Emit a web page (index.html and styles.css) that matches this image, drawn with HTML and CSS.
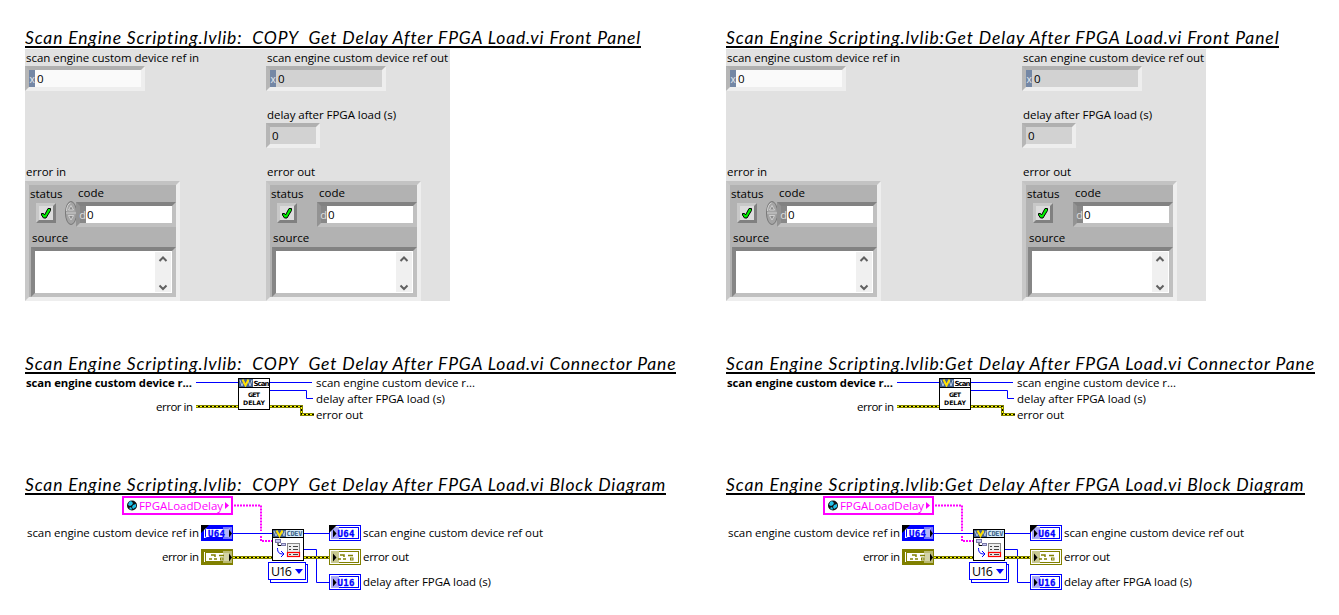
FILE: index.html
```html
<!DOCTYPE html>
<html lang="en">
<head>
<meta charset="utf-8">
<title>Scan Engine Scripting.lvlib</title>
<link rel="stylesheet" href="styles.css">
</head>
<body>
<svg class="defs" width="0" height="0" aria-hidden="true">
  <symbol id="check" viewBox="0 0 14 14"><path d="M2.500 7.500h2l1 1.500 3.500-6.500h2.500v2l-4.500 7.500h-2.500l-2-3z" fill="#00f000" stroke="#000" stroke-width="1"/></symbol>
  <symbol id="spin" viewBox="0 0 12 24"><ellipse cx="6" cy="12" rx="5.500" ry="11.500" fill="#a4a4a4" stroke="#777"/><path d="M1.500 10a5 9 0 0 1 4-8" fill="none" stroke="#d4d4d4"/><path d="M1 12h10" stroke="#ccc"/><path d="M3.500 9 6 4.500 8.500 9z" fill="#8c8c8c" stroke="#ddd" stroke-width=".8"/><path d="M3.500 14.500h5L6 19z" fill="#8c8c8c" stroke="#ddd" stroke-width=".8"/></symbol>
  <symbol id="scroll" viewBox="0 0 16 40"><path d="M4.500 9 8 5.500l3.500 3.500M4.500 33.500 8 37l3.500-3.500" fill="none" stroke="#606060" stroke-width="2"/></symbol>
  <symbol id="wires" viewBox="25 374 651 50">
    <path d="M196 382.500H238M270 382.500H312M270 390.500H306.500V398.500H313" class="wire"/>
    <path d="M196 406.500H238M270 406.500H301.500V414.500H314" class="err"/>
    <path d="M196 406.500H238M270 406.500H301.500V414.500H314" class="err-core"/>
    <path d="M196 406.500H238M270 406.500H301.500V414.500H314" class="err-dash"/>
    <rect x="238.500" y="378.500" width="31" height="31" fill="#fff" stroke="#000"/>
    <rect x="239" y="379" width="14" height="8" fill="#42618f"/>
    <path d="M240 380l2 6 2-5M248 380l2 6 2-6" class="vs"/>
    <path d="M242.500 379.500l3 6 3-6" class="v"/>
    <path d="M239 387.500H269" stroke="#000"/>
  </symbol>
  <symbol id="diagram" viewBox="25 495 651 96">
    <path d="M233 533.500H272M304 533.500H329M304 549.500H316.500V582.500H329" class="wire"/>
    <path d="M233 557.500H272M304 557.500H329" class="err"/>
    <path d="M233 557.500H272M304 557.500H329" class="err-core"/>
    <path d="M233 557.500H272M304 557.500H329" class="err-dash"/>
    <path d="M234 505.500H261V531M261 536V541H272" class="str"/>
    <rect x="123" y="497" width="109" height="17" fill="#fff" stroke="#f0f" stroke-width="2"/>
    <circle cx="132" cy="505.500" r="5" fill="#111"/><path d="M129 502l2-1 2 2-1 2-2 1-2-1zM129 508l2-1 1 2-1 1zM133 505l3-1v3l-3 2-1-2z" fill="#20c0e8"/>
    <path d="M225 502v7l4-3.500z" fill="#f0f"/>
    <rect x="202.500" y="526.500" width="29" height="13" fill="#fff" stroke="#00f" stroke-width="3"/><rect x="205.500" y="528.500" width="24" height="9" rx="1" fill="none" stroke="#00f"/>
    <rect x="223" y="527" width="9" height="12" fill="#9c9cf8" opacity=".75"/>
    <path d="M229 529.500v8l3-4z" fill="#000"/>
    <path d="M201 525h8l-8 8z" fill="#000"/>
    <g color="#808000">
      <rect x="202.500" y="550.500" width="29" height="13" fill="#fff" stroke="currentColor" stroke-width="3"/><rect x="205.500" y="552.500" width="24" height="9" fill="none" stroke="currentColor"/>
      <rect x="223" y="551" width="9" height="12" fill="#c8c890" opacity=".8"/>
      <path d="M229 553.500v8l3-4z" fill="#000"/>
      <path d="M211 555h4v2M219 555.500h5M209 559h3M214 559h3" stroke="currentColor" stroke-width="1.500" fill="none"/><rect x="220.500" y="558" width="2.500" height="2" fill="none" stroke="currentColor"/>
      <rect x="329.500" y="549.500" width="31" height="15" fill="#fff" stroke="currentColor"/><rect x="331.500" y="551.500" width="27" height="11" fill="#fff" stroke="currentColor"/>
      <rect x="331" y="551" width="8" height="12" fill="#c8c890"/>
      <path d="M333 553.500v8l3.500-4z" fill="#000"/>
      <path d="M340 555h4v2M348 555.500h5M338 559h3M343 559h3" stroke="currentColor" stroke-width="1.500" fill="none"/><rect x="350.500" y="558" width="2.500" height="2" fill="none" stroke="currentColor"/>
    </g>
    <g id="u64out"><rect x="329.500" y="525.500" width="31" height="15" fill="#fff" stroke="#00f"/><rect x="331.500" y="527.500" width="27" height="11" fill="#fff" stroke="#00f"/><rect x="331" y="527" width="8" height="12" fill="#a8a8f8"/><path d="M333 529.500v8l3.500-4z" fill="#000"/></g>
    <use href="#u64out" y="49"/>
    <path d="M329 525h8l-8 8z" fill="#000"/>
    <rect x="272.500" y="529.500" width="31" height="31" fill="#fff" stroke="#000"/>
    <rect x="273" y="530" width="13" height="7" fill="#42618f"/>
    <rect x="286" y="530" width="17" height="7" fill="#d8ecfa"/>
    <path d="M273 537.500h30" stroke="#000"/>
    <path d="M274 531l2 5 2-4M282 531l2 5 1-5" class="vs"/><path d="M276.500 530.500l3 5.500 3-5.500" class="v"/>
    <rect x="275.500" y="539.500" width="5" height="3" fill="#c8c8f0" stroke="#7878a8"/><rect x="281.500" y="543.500" width="4" height="2" fill="#c8c8f0" stroke="#7878a8"/>
    <path d="M278 543v2.500h3" fill="none" stroke="#000"/>
    <path d="M277.500 548c0 5 2 6 6 6M281 551l3 3-3 3" fill="none" stroke="#00f"/>
    <rect x="287.500" y="543.500" width="12" height="13" fill="#eee" stroke="#888"/>
    <path d="M289 546.500h2M289 549.500h2M289 554.500h2M293 546.500h5M293 549.500h5M293 554.500h5" stroke="#444"/>
    <rect x="287.500" y="552.500" width="12" height="4" fill="none" stroke="#f00" stroke-width="1.200"/>
    <path d="M307.500 564V582.500H270M306 564.500h1.500M270.500 580v2" fill="none" stroke="#00f"/>
    <rect x="268.500" y="562.500" width="37" height="17" fill="#fff" stroke="#00f"/>
    <path d="M295 569h8l-4 5z" fill="#00f"/>
  </symbol>
</svg>
<main class="page">
  <article class="vi">
    <section class="front">
      <h2 class="title">Scan Engine Scripting.lvlib:  COPY  Get Delay After FPGA Load.vi Front Panel</h2>
      <div class="panel">
        <div class="side">
          <div class="field top"><span class="label">scan engine custom device ref in</span><div class="num wide edit"><i class="radix">x</i>0</div></div>
          <span class="label">error in</span>
          <div class="cluster">
            <div class="col-status"><span>status</span><div class="led"><svg><use href="#check"/></svg></div></div>
            <svg class="spin"><use href="#spin"/></svg>
            <div class="col-code"><span>code</span><div class="code"><i class="radix">d</i>0</div></div>
            <div class="src"><span>source</span><div class="box"><svg class="scroll"><use href="#scroll"/></svg></div></div>
          </div>
        </div>
        <div class="side">
          <div class="field"><span class="label">scan engine custom device ref out</span><div class="num wide"><i class="radix">x</i>0</div></div>
          <div class="field"><span class="label">delay after FPGA load (s)</span><div class="num">0</div></div>
          <span class="label">error out</span>
          <div class="cluster">
            <div class="col-status"><span>status</span><div class="led"><svg><use href="#check"/></svg></div></div>
            <div class="spin"></div>
            <div class="col-code"><span>code</span><div class="code"><i class="radix">d</i>0</div></div>
            <div class="src"><span>source</span><div class="box"><svg class="scroll"><use href="#scroll"/></svg></div></div>
          </div>
        </div>
      </div>
    </section>
    <section class="connector">
      <h2 class="title">Scan Engine Scripting.lvlib:  COPY  Get Delay After FPGA Load.vi Connector Pane</h2>
      <svg class="canvas" width="651" height="50" viewBox="25 374 651 50">
        <use href="#wires" x="25" y="374" width="651" height="50"/>
        <text x="26" y="387" textLength="166" class="b">scan engine custom device r...</text>
        <text x="156" y="411" textLength="37">error in</text>
        <text x="316" y="387" textLength="159">scan engine custom device r...</text>
        <text x="316" y="403" textLength="129">delay after FPGA load (s)</text>
        <text x="316" y="419" textLength="47">error out</text>
        <text x="253.500" y="385.500" textLength="16" class="px scan">Scan</text>
        <text x="248" y="396.500" textLength="12" class="px">GET</text>
        <text x="243" y="405" textLength="22" class="px">DELAY</text>
      </svg>
    </section>
    <section class="block">
      <h2 class="title">Scan Engine Scripting.lvlib:  COPY  Get Delay After FPGA Load.vi Block Diagram</h2>
      <svg class="canvas" width="651" height="96" viewBox="25 495 651 96">
        <use href="#diagram" x="25" y="495" width="651" height="96"/>
        <text x="139" y="510" textLength="84" class="pink">FPGALoadDelay</text>
        <text x="27" y="537" textLength="172">scan engine custom device ref in</text>
        <text x="162" y="561" textLength="37">error in</text>
        <text x="363" y="537" textLength="180">scan engine custom device ref out</text>
        <text x="363" y="561" textLength="46">error out</text>
        <text x="363" y="586" textLength="128">delay after FPGA load (s)</text>
        <text x="208" y="536.500" textLength="17" class="type">U64</text>
        <text x="337.500" y="536.500" textLength="17" class="type">U64</text>
        <text x="337.500" y="585.500" textLength="17" class="type">U16</text>
        <text x="271" y="576" textLength="21" class="poly">U16</text>
        <text x="286.500" y="536" textLength="16" class="cdev">CDEV</text>
      </svg>
    </section>
  </article>
  <article class="vi second">
    <section class="front">
      <h2 class="title">Scan Engine Scripting.lvlib:Get Delay After FPGA Load.vi Front Panel</h2>
      <div class="panel">
        <div class="side">
          <div class="field top"><span class="label">scan engine custom device ref in</span><div class="num wide edit"><i class="radix">x</i>0</div></div>
          <span class="label">error in</span>
          <div class="cluster">
            <div class="col-status"><span>status</span><div class="led"><svg><use href="#check"/></svg></div></div>
            <svg class="spin"><use href="#spin"/></svg>
            <div class="col-code"><span>code</span><div class="code"><i class="radix">d</i>0</div></div>
            <div class="src"><span>source</span><div class="box"><svg class="scroll"><use href="#scroll"/></svg></div></div>
          </div>
        </div>
        <div class="side">
          <div class="field"><span class="label">scan engine custom device ref out</span><div class="num wide"><i class="radix">x</i>0</div></div>
          <div class="field"><span class="label">delay after FPGA load (s)</span><div class="num">0</div></div>
          <span class="label">error out</span>
          <div class="cluster">
            <div class="col-status"><span>status</span><div class="led"><svg><use href="#check"/></svg></div></div>
            <div class="spin"></div>
            <div class="col-code"><span>code</span><div class="code"><i class="radix">d</i>0</div></div>
            <div class="src"><span>source</span><div class="box"><svg class="scroll"><use href="#scroll"/></svg></div></div>
          </div>
        </div>
      </div>
    </section>
    <section class="connector">
      <h2 class="title">Scan Engine Scripting.lvlib:Get Delay After FPGA Load.vi Connector Pane</h2>
      <svg class="canvas" width="613" height="50" viewBox="25 374 613 50">
        <use href="#wires" x="25" y="374" width="651" height="50"/>
        <text x="26" y="387" textLength="166" class="b">scan engine custom device r...</text>
        <text x="156" y="411" textLength="37">error in</text>
        <text x="316" y="387" textLength="159">scan engine custom device r...</text>
        <text x="316" y="403" textLength="129">delay after FPGA load (s)</text>
        <text x="316" y="419" textLength="47">error out</text>
        <text x="253.500" y="385.500" textLength="16" class="px scan">Scan</text>
        <text x="248" y="396.500" textLength="12" class="px">GET</text>
        <text x="243" y="405" textLength="22" class="px">DELAY</text>
      </svg>
    </section>
    <section class="block">
      <h2 class="title">Scan Engine Scripting.lvlib:Get Delay After FPGA Load.vi Block Diagram</h2>
      <svg class="canvas" width="613" height="96" viewBox="25 495 613 96">
        <use href="#diagram" x="25" y="495" width="651" height="96"/>
        <text x="139" y="510" textLength="84" class="pink">FPGALoadDelay</text>
        <text x="27" y="537" textLength="172">scan engine custom device ref in</text>
        <text x="162" y="561" textLength="37">error in</text>
        <text x="363" y="537" textLength="180">scan engine custom device ref out</text>
        <text x="363" y="561" textLength="46">error out</text>
        <text x="363" y="586" textLength="128">delay after FPGA load (s)</text>
        <text x="208" y="536.500" textLength="17" class="type">U64</text>
        <text x="337.500" y="536.500" textLength="17" class="type">U64</text>
        <text x="337.500" y="585.500" textLength="17" class="type">U16</text>
        <text x="271" y="576" textLength="21" class="poly">U16</text>
        <text x="286.500" y="536" textLength="16" class="cdev">CDEV</text>
      </svg>
    </section>
  </article>
</main>
</body>
</html>
```
FILE: styles.css
```css
* { box-sizing: border-box; }
body { margin: 0; background: #fff; color: #000; font: 11.5px/17px "Open Sans", "Noto Sans", sans-serif; overflow: hidden; }
.defs { position: absolute; }
.page { display: grid; grid-template-columns: 701px 613px; padding: 26px 0 0 25px; height: 615px; }
.vi { display: grid; grid-template-rows: 326px 121px 118px; }

.title { display: block; width: max-content; height: 22px; margin: 0; overflow: hidden; white-space: pre; border-bottom: 2px solid #000; font: italic 400 17.5px/24px Lato, sans-serif; letter-spacing: 0.85px; }
.second .title { letter-spacing: 0.9px; }
.canvas { display: block; }

.panel { display: grid; grid-template-columns: 241px 1fr; width: 425px; height: 252px; margin-top: 1px; background: #e1e1e1; }
.second .panel { grid-template-columns: 296px 1fr; width: 480px; }
.field { height: 57px; }
.field.top { height: 114px; }
.label { display: block; height: 17px; padding-left: 1px; white-space: nowrap; line-height: 18px; letter-spacing: -0.04px; }
.label + .cluster { margin-top: 1px; }

.num { display: flex; width: 54px; height: 25px; padding-left: 2px; background: #d2d2d2; border: 4px solid; border-color: #b0b0b0 #eee #eee #b6b6b6; }
.num.wide { width: 120px; padding-left: 0; }
.num.edit { background: #fafafa; }
.radix { width: 6px; height: 17px; margin-right: 2px; background: #7487a5; color: #e6e9f0; font-style: normal; font-size: 10px; line-height: 18px; text-align: center; }

.cluster { display: grid; grid-template-columns: 36px 12px 99px; grid-template-rows: 46px 66px; width: 155px; height: 120px; background: #b2b2b2; border: 4px solid; border-color: #c3c3c3 #eee #eee #c8c8c8; }
.col-status { padding-left: 1px; line-height: 18px; }
.col-status span { display: block; height: 18px; }
.led { width: 20px; height: 20px; margin-left: 6px; background: #dcdcdc; border: 3px solid; border-color: #c8c8c8 #808080 #808080 #c8c8c8; }
.led svg { display: block; width: 14px; height: 14px; }
.spin { width: 12px; height: 24px; margin-top: 16px; }
.col-code span { display: block; height: 17px; padding-left: 1px; line-height: 16px; }
.code { display: flex; width: 100px; height: 25px; margin-left: -1px; background: #fff; border: 4px solid; border-color: #828282 #c0c0c0 #c0c0c0 #939393; }
.code .radix { background: #888; color: #ddd; margin-right: 1px; font-size: 11px; line-height: 17px; text-indent: -1px; }
.src { grid-column: 1 / -1; padding-left: 2px; }
.src span { display: block; height: 16px; padding-left: 1px; line-height: 14px; }
.box { display: flex; justify-content: flex-end; width: 145px; height: 50px; padding: 1px; background: #fff; border: 4px solid; border-color: #828282 #c0c0c0 #c0c0c0 #868686; }
.scroll { width: 16px; height: 40px; background: #f0f0f0; }

text { font: 11.5px "Open Sans", "Noto Sans", sans-serif; fill: #000; }
text.b { font-weight: 700; font-size: 11.3px; }
text.px { font: 700 6.2px "DejaVu Sans", sans-serif; }
text.scan { font-size: 7px; }
text.type { font: 700 9px "DejaVu Sans Mono", monospace; fill: #00f; stroke: #00f; stroke-width: 0.3px; }
text.cdev { font: 700 7px "DejaVu Sans Mono", monospace; fill: #3b6388; }
text.poly { font-size: 12.5px; }
text.pink { fill: #f0f; }

.wire { fill: none; stroke: #00f; }
.err { fill: none; stroke: #808000; stroke-width: 3; }
.err-core { fill: none; stroke: #000; }
.err-dash { fill: none; stroke: #ff0; stroke-dasharray: 2 2; }
.str { fill: none; stroke: #f0f; stroke-width: 2; stroke-dasharray: 2 1; }
.v { fill: none; stroke: #ffe000; stroke-width: 2; }
.vs { fill: none; stroke: #b8c8e0; }
```
